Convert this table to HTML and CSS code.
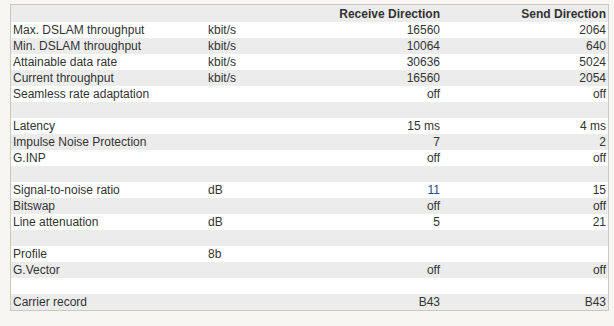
FILE: index.html
```html
<!DOCTYPE html>
<html>
<head>
<meta charset="utf-8">
<link rel="stylesheet" href="styles.css">
</head>
<body>
<div class="page">
<table class="dsl">
<colgroup>
<col class="c-label"><col class="c-unit"><col class="c-rx"><col class="c-tx">
</colgroup>
<thead>
<tr><th></th><th></th><th class="num">Receive Direction</th><th class="num">Send Direction</th></tr>
</thead>
<tbody>
<tr><td>Max. DSLAM throughput</td><td>kbit/s</td><td class="num">16560</td><td class="num">2064</td></tr>
<tr><td>Min. DSLAM throughput</td><td>kbit/s</td><td class="num">10064</td><td class="num">640</td></tr>
<tr><td>Attainable data rate</td><td>kbit/s</td><td class="num">30636</td><td class="num">5024</td></tr>
<tr><td>Current throughput</td><td>kbit/s</td><td class="num">16560</td><td class="num">2054</td></tr>
<tr><td>Seamless rate adaptation</td><td></td><td class="num">off</td><td class="num">off</td></tr>
<tr><td></td><td></td><td></td><td></td></tr>
<tr><td>Latency</td><td></td><td class="num">15 ms</td><td class="num">4 ms</td></tr>
<tr><td>Impulse Noise Protection</td><td></td><td class="num">7</td><td class="num">2</td></tr>
<tr><td>G.INP</td><td></td><td class="num">off</td><td class="num">off</td></tr>
<tr><td></td><td></td><td></td><td></td></tr>
<tr><td>Signal-to-noise ratio</td><td>dB</td><td class="num link">11</td><td class="num">15</td></tr>
<tr><td>Bitswap</td><td></td><td class="num">off</td><td class="num">off</td></tr>
<tr><td>Line attenuation</td><td>dB</td><td class="num">5</td><td class="num">21</td></tr>
<tr><td></td><td></td><td></td><td></td></tr>
<tr><td>Profile</td><td>8b</td><td></td><td></td></tr>
<tr><td>G.Vector</td><td></td><td class="num">off</td><td class="num">off</td></tr>
<tr><td></td><td></td><td></td><td></td></tr>
<tr><td>Carrier record</td><td></td><td class="num">B43</td><td class="num">B43</td></tr>
</tbody>
</table>
</div>
</body>
</html>
```
FILE: styles.css
```css
html, body {
  margin: 0;
  padding: 0;
  background: #f7f6f2;
}
.page {
  padding: 4px 0 0 10px;
}
.dsl {
  width: 599px;
  table-layout: fixed;
  border-collapse: separate;
  border-spacing: 0;
  border: 1px solid #c9c8c4;
  background: #ffffff;
  font-family: "Liberation Sans", Arial, Helvetica, sans-serif;
  font-size: 12px;
  color: #333333;
}
.c-label { width: 195px; }
.c-unit { width: 70px; }
.c-rx { width: 166px; }
.c-tx { width: 166px; }
.dsl th, .dsl td {
  padding: 1px 2px 0 2px;
  height: 15px;
  line-height: 15px;
  text-align: left;
  white-space: nowrap;
  overflow: hidden;
}
.dsl th {
  font-weight: bold;
  height: 16px;
  padding-top: 1px;
  padding-bottom: 0;
}
.dsl thead tr {
  background: #ececec;
}
.dsl tbody tr:nth-child(even) {
  background: #ececec;
}
.dsl tbody tr:nth-child(odd) {
  background: #ffffff;
}
.dsl .num {
  text-align: right;
}
.dsl .link {
  color: #2c4a80;
}
```
